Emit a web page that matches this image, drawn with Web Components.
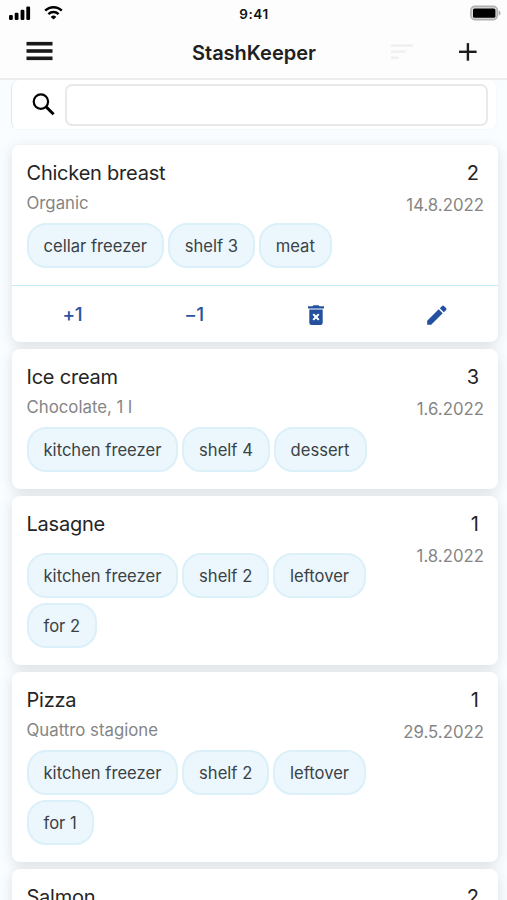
<!DOCTYPE html>
<html lang="en">
<head>
<meta charset="utf-8">
<title>StashKeeper</title>
<style>
    html, body {
        margin: 0;
        height: 900px;
        overflow: hidden;
    }
    body {
        background: #fafdff;
        font-family: Inter, Roboto, "Liberation Sans", sans-serif;
        color: #252525;
    }
</style>
</head>
<body>
<stash-app>
    <status-bar slot="top" time="9:41"></status-bar>
    <nav-bar slot="top">StashKeeper</nav-bar>
    <search-box></search-box>
    <stash-item name="Chicken breast" note="Organic" count="2" date="14.8.2022" tags="cellar freezer|shelf 3|meat">
        <item-actions slot="actions"></item-actions>
    </stash-item>
    <stash-item name="Ice cream" note="Chocolate, 1 l" count="3" date="1.6.2022" tags="kitchen freezer|shelf 4|dessert"></stash-item>
    <stash-item name="Lasagne" count="1" date="1.8.2022" tags="kitchen freezer|shelf 2|leftover|for 2"></stash-item>
    <stash-item name="Pizza" note="Quattro stagione" count="1" date="29.5.2022" tags="kitchen freezer|shelf 2|leftover|for 1"></stash-item>
    <stash-item name="Salmon" count="2"></stash-item>
</stash-app>

<script>
class StashApp extends HTMLElement {
    constructor() {
        super();
        this.attachShadow({ mode: 'open' });
        this.shadowRoot.innerHTML = `
            <style>
                :host {
                    display: block;
                    height: 900px;
                    overflow: hidden;
                }
                header {
                    height: 78px;
                    background: #fdfdfd;
                    border-bottom: 2px solid #ececed;
                }
                main {
                    display: flex;
                    flex-direction: column;
                    gap: 7px;
                    padding: 0 9px 0 11.5px;
                }
            </style>
            <header><slot name="top"></slot></header>
            <main><slot></slot></main>
        `;
    }
}

class StatusBar extends HTMLElement {
    constructor() {
        super();
        this.attachShadow({ mode: 'open' });
        this.shadowRoot.innerHTML = `
            <style>
                :host {
                    display: grid;
                    grid-template-columns: 1fr auto 1fr;
                    align-items: center;
                    height: 26px;
                    padding: 0 6px 0 8px;
                    font-size: 13.5px;
                    font-weight: 600;
                    color: #111;
                }
                .left {
                    display: flex;
                    gap: 13px;
                }
                .right {
                    display: flex;
                    justify-content: flex-end;
                }
                svg {
                    display: block;
                }
                .time {
                    padding: 1px 1px 0 0;
                    letter-spacing: 0.6px;
                }
            </style>
            <div class="left">
                <svg width="23" height="16" viewBox="0 0 23 16">
                    <rect x="1" y="10" width="3.8" height="5" rx="1.2"/>
                    <rect x="6.7" y="7.8" width="3.8" height="7.2" rx="1.2"/>
                    <rect x="12.6" y="4.8" width="3.8" height="10.2" rx="1.2"/>
                    <rect x="18.3" y="1.5" width="3.8" height="13.5" rx="1.2"/>
                </svg>
                <svg width="20" height="16" viewBox="0 0 20 16" fill="none" stroke="#000" stroke-width="2.4">
                    <path d="M1.2 5.7A11.6 11.6 0 0 1 17.8 5.7"/>
                    <path d="M4.4 9.1A7.4 7.4 0 0 1 14.6 9.1"/>
                    <path d="M9.5 14.6L6.7 11.9A4 4 0 0 1 12.3 11.9Z" fill="#000" stroke="none"/>
                </svg>
            </div>
            <div class="time">${this.getAttribute('time')}</div>
            <div class="right">
                <svg width="31" height="16" viewBox="0 0 31 16">
                    <rect x="0.9" y="1.4" width="26.4" height="13.2" rx="4" fill="#ddd" stroke="#b0b0b0" stroke-width="1.6"/>
                    <rect x="3" y="3.4" width="22.4" height="9.4" rx="1.6"/>
                    <path d="M28.7 5.3Q30.6 6.3 30.6 8T28.7 10.7Z" fill="#a9a9a9"/>
                </svg>
            </div>
        `;
    }
}

class NavBar extends HTMLElement {
    constructor() {
        super();
        this.attachShadow({ mode: 'open' });
        this.shadowRoot.innerHTML = `
            <style>
                :host {
                    display: grid;
                    grid-template-columns: 1fr auto 1fr;
                    align-items: center;
                    height: 52px;
                    padding: 0 30px 0 26px;
                }
                h1 {
                    margin: 0;
                    padding: 1px 0 0 5px;
                    font-size: 20px;
                    font-weight: 600;
                    line-height: 24px;
                    color: #202020;
                }
                .tools {
                    display: flex;
                    justify-content: flex-end;
                    align-items: center;
                    gap: 44px;
                }
                svg {
                    display: block;
                }
            </style>
            <svg width="27" height="20" viewBox="0 0 27 20" fill="#191919" style="margin-top: -3px">
                <rect x="0.5" y="0.9" width="26" height="3.6"/>
                <rect x="0.5" y="8.2" width="26" height="3.6"/>
                <rect x="0.5" y="15.5" width="26" height="3.6"/>
            </svg>
            <h1><slot></slot></h1>
            <div class="tools">
                <svg width="23" height="18" viewBox="0 0 23 18" fill="#f0f0f0">
                    <rect x="0" y="1.2" width="22" height="2.6"/>
                    <rect x="0" y="7.3" width="14.6" height="2.6"/>
                    <rect x="0" y="13.5" width="7.4" height="2.6"/>
                </svg>
                <svg width="19" height="18" viewBox="0 0 19 18" fill="#1c1c1c">
                    <rect x="1" y="7.6" width="17.6" height="2.4"/>
                    <rect x="8.7" y="0.1" width="2.4" height="17.6"/>
                </svg>
            </div>
        `;
    }
}

class SearchBox extends HTMLElement {
    constructor() {
        super();
        this.attachShadow({ mode: 'open' });
        this.shadowRoot.innerHTML = `
            <style>
                :host {
                    display: flex;
                    align-items: center;
                    box-sizing: border-box;
                    height: 50px;
                    margin: 0 1px 8px -0.5px;
                    padding: 0 8px 0 20px;
                    gap: 11px;
                    background: #fff;
                    border: 1px solid #f5f8f9;
                    border-left-color: #e4e8ea;
                    border-top: 0;
                    border-radius: 8px;
                }
                svg {
                    display: block;
                    flex: none;
                }
                input {
                    flex: 1;
                    min-width: 0;
                    box-sizing: border-box;
                    height: 42px;
                    margin-left: -1px;
                    border: 2px solid #e9e9e9;
                    border-radius: 7px;
                    background: #fff;
                    outline: none;
                    font: inherit;
                }
            </style>
            <svg width="23" height="23" viewBox="0 0 23 23" fill="none" stroke="#000">
                <circle cx="8.9" cy="8.6" r="7.2" stroke-width="2.2"/>
                <path d="M13.9 13.6L21.6 21.3" stroke-width="2.9"/>
            </svg>
            <input type="text">
        `;
    }
}

class StashTag extends HTMLElement {
    constructor() {
        super();
        this.attachShadow({ mode: 'open' });
        this.shadowRoot.innerHTML = `
            <style>
                :host {
                    display: block;
                    box-sizing: border-box;
                    height: 45px;
                    padding: 0 15px;
                    border: 2px solid #dbf0f8;
                    border-radius: 19px;
                    background: #ebf7fd;
                    font-size: 16.6px;
                    line-height: 42px;
                    white-space: nowrap;
                    color: #3b4245;
                }
            </style>
            <slot></slot>
        `;
    }
}

class ItemActions extends HTMLElement {
    constructor() {
        super();
        this.attachShadow({ mode: 'open' });
        this.shadowRoot.innerHTML = `
            <style>
                :host {
                    display: grid;
                    grid-template-columns: repeat(4, 1fr);
                    height: 56px;
                    border-top: 1px solid #c4eaf3;
                }
                button {
                    display: flex;
                    align-items: center;
                    justify-content: center;
                    border: 0;
                    padding: 2px 0 0 0;
                    background: none;
                    font: 500 19px/24px Inter, Roboto, sans-serif;
                    letter-spacing: -0.5px;
                    color: #2853a0;
                }
                svg {
                    margin-top: -1px;
                }
            </style>
            <button>+1</button>
            <button>−1</button>
            <button aria-label="Delete">
                <svg width="16" height="20" viewBox="0 0 16 20" fill="#2450a0">
                    <path d="M0 1.3H4.5L5.5 0.2H10.5L11.5 1.3H16V3.5H0Z"/>
                    <path fill-rule="evenodd" d="M1.3 4.6H14.7V17.8Q14.7 20 12.5 20H3.5Q1.3 20 1.3 17.8ZM4.5 9.8L6.6 12L4.5 14.2L5.9 15.6L8 13.4L10.1 15.6L11.5 14.2L9.4 12L11.5 9.8L10.1 8.4L8 10.6L5.9 8.4Z"/>
                </svg>
            </button>
            <button aria-label="Edit">
                <svg width="20" height="20" viewBox="0 0 20 20" fill="#2450a0">
                    <path d="M0.2 15.8V19.8H4.2L15.7 8.3L11.7 4.3Z"/>
                    <path d="M12.8 3.2L15.1 0.9Q16 0 16.9 0.9L19.1 3.1Q20 4 19.1 4.9L16.8 7.2Z"/>
                </svg>
            </button>
        `;
    }
}

class StashItem extends HTMLElement {
    constructor() {
        super();
        this.attachShadow({ mode: 'open' });
        this.render();
    }

    css() {
        return `
            :host {
                display: block;
                background: #fff;
                border-radius: 8px;
                box-shadow: 0 3px 14px rgba(0, 0, 0, 0.12);
            }
            .body {
                display: grid;
                grid-template-columns: 1fr auto;
                column-gap: 8px;
                min-height: 90px;
                padding: 16px 14px 17px 15px;
            }
            .name {
                font-size: 20px;
                line-height: 24px;
                letter-spacing: -0.22px;
            }
            .note {
                margin-top: 8px;
                font-size: 16.8px;
                line-height: 21px;
                color: #858585;
            }
            .tags {
                display: flex;
                flex-wrap: wrap;
                gap: 5px 3.7px;
                margin-top: 9px;
            }
            .name + .tags {
                margin-top: 17px;
            }
            .side {
                text-align: right;
            }
            .count {
                padding-right: 5px;
                font-size: 20px;
                line-height: 24px;
            }
            .date {
                margin-top: 10px;
                font-size: 16.8px;
                line-height: 21px;
                color: #858585;
            }
        `;
    }

    renderTags() {
        const tags = this.getAttribute('tags');
        if (!tags) return '';
        return `<div class="tags">${tags.split('|').map(t => `<stash-tag>${t}</stash-tag>`).join('')}</div>`;
    }

    render() {
        const note = this.getAttribute('note');
        const date = this.getAttribute('date');
        this.shadowRoot.innerHTML = `
            <style>${this.css()}</style>
            <div class="body">
                <div>
                    <div class="name">${this.getAttribute('name')}</div>${note ? `<div class="note">${note}</div>` : ''}${this.renderTags()}
                </div>
                <div class="side">
                    <div class="count">${this.getAttribute('count')}</div>
                    ${date ? `<div class="date">${date}</div>` : ''}
                </div>
            </div>
            <slot name="actions"></slot>
        `;
    }
}

customElements.define('stash-tag', StashTag);
customElements.define('item-actions', ItemActions);
customElements.define('stash-item', StashItem);
customElements.define('search-box', SearchBox);
customElements.define('status-bar', StatusBar);
customElements.define('nav-bar', NavBar);
customElements.define('stash-app', StashApp);
</script>
</body>
</html>
